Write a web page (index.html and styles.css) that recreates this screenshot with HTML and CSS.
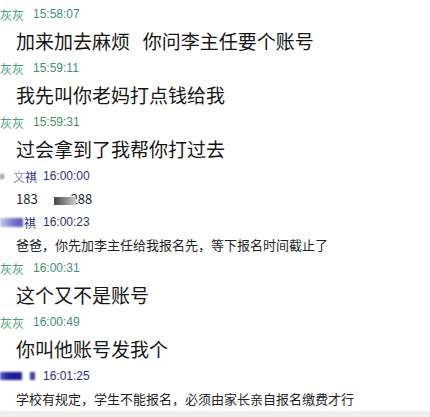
FILE: index.html
```html
<!DOCTYPE html>
<html lang="zh-CN">
<head>
    <meta charset="UTF-8">
    <title>聊天记录</title>
    <link rel="stylesheet" href="styles.css">
</head>
<body>
    <div class="chat">
        <div class="head green"><span class="name">灰灰</span><span class="time">15:58:07</span></div>
        <div class="msg big">加来加去麻烦&nbsp;&nbsp;&nbsp;你问李主任要个账号</div>

        <div class="head green"><span class="name">灰灰</span><span class="time">15:59:11</span></div>
        <div class="msg big">我先叫你老妈打点钱给我</div>

        <div class="head green"><span class="name">灰灰</span><span class="time">15:59:31</span></div>
        <div class="msg big">过会拿到了我帮你打过去</div>

        <div class="head blue">
            <span class="name"><span class="bit cut"></span><span class="fade">文</span>祺</span>
            <span class="time">16:00:00</span>
        </div>
        <div class="msg small">183<span class="mask"></span>288</div>

        <div class="head blue">
            <span class="name"><span class="bit purple"></span>祺</span>
            <span class="time">16:00:23</span>
        </div>
        <div class="msg small">爸爸，你先加李主任给我报名先，等下报名时间截止了</div>

        <div class="head green"><span class="name">灰灰</span><span class="time">16:00:31</span></div>
        <div class="msg big">这个又不是账号</div>

        <div class="head green"><span class="name">灰灰</span><span class="time">16:00:49</span></div>
        <div class="msg big">你叫他账号发我个</div>

        <div class="head blue">
            <span class="name"><span class="bit navy"></span><span class="bit dot"></span></span>
            <span class="time">16:01:25</span>
        </div>
        <div class="msg small">学校有规定，学生不能报名，必须由家长亲自报名缴费才行</div>
    </div>
    <div class="bottom"></div>
</body>
</html>
```

FILE: styles.css
```css
* {
    margin: 0;
    padding: 0;
    box-sizing: border-box;
}
body {
    background: #fff;
    width: 430px;
    height: 417px;
    overflow: hidden;
    display: flex;
    flex-direction: column;
    font-family: "Liberation Sans", "Noto Sans CJK SC", sans-serif;
    color: #1a1a1a;
}
.chat {
    padding-top: 1px;
    flex: 1;
}
.head {
    display: flex;
    align-items: center;
    height: 26px;
    font-size: 12px;
}
.head .name {
    display: flex;
    align-items: center;
    font-family: "Noto Sans CJK SC", sans-serif;
}
.green .name {
    width: 33px;
    color: #47a078;
}
.green .time {
    color: #3f8f6b;
}
.blue .name {
    width: 43px;
    color: #2c2c86;
}
.blue .time {
    color: #2e2e7c;
}
.fade {
    color: #8a8ac0;
    filter: blur(0.5px);
}
.bit {
    display: inline-block;
    filter: blur(0.8px);
}
.bit.cut {
    width: 4px;
    height: 5px;
    margin-right: 9px;
    background: #9a9a9a;
}
.bit.purple {
    width: 23px;
    height: 9px;
    margin-right: 1px;
    background: linear-gradient(90deg, #c8c8ee, #7474c8 60%, #5a5ab8);
}
.bit.navy {
    width: 22px;
    height: 8px;
    margin-right: 8px;
    background: linear-gradient(90deg, #5858b8, #1e1e96 40%, #1a1a8a);
}
.bit.dot {
    width: 5px;
    height: 8px;
    background: #3c3ca8;
}
.msg {
    padding-left: 16px;
    font-family: "Noto Sans CJK SC", sans-serif;
    white-space: nowrap;
}
.msg.big {
    height: 28px;
    line-height: 28px;
    font-size: 19px;
    color: #151515;
}
.msg.small {
    height: 20px;
    line-height: 20px;
    font-size: 13px;
    color: #1f1f1f;
}
.msg.small:nth-of-type(1) {
    font-family: "Liberation Sans", sans-serif;
}
.mask {
    display: inline-block;
    position: relative;
    width: 22px;
    height: 8px;
    margin: 0 -5px 0 16px;
    vertical-align: -1px;
    background: linear-gradient(90deg, #444, #888 50%, #cfcfcf);
    filter: blur(0.7px);
}
.bottom {
    height: 6px;
    background: #eeeeee;
}
```
